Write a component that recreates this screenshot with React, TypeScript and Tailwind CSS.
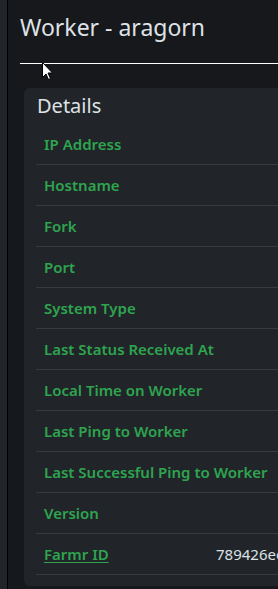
import React from "react";

const rows: { label: string; value?: string; link?: boolean }[] = [
  { label: "IP Address" },
  { label: "Hostname" },
  { label: "Fork" },
  { label: "Port" },
  { label: "System Type" },
  { label: "Last Status Received At" },
  { label: "Local Time on Worker" },
  { label: "Last Ping to Worker" },
  { label: "Last Successful Ping to Worker" },
  { label: "Version" },
  { label: "Farmr ID", value: "789426ee3b1f4c2a", link: true },
];

export default function App() {
  return (
    <div
      className="relative w-[278px] h-[589px] overflow-hidden flex bg-[#212529]"
      style={{ fontFamily: '"Noto Sans", "Open Sans", sans-serif' }}
    >
      <div className="w-[7px] shrink-0 bg-[#212529] border-r border-black box-content" />
      <div className="flex-1 min-w-0 bg-[#16181b] pl-[12px] pt-[13px]">
        <h4 className="text-[23px] leading-[28px] text-[#dee2e6] whitespace-nowrap">Worker - aragorn</h4>
        <div className="mt-[22px] h-px bg-white w-[600px]" />
        <div className="mt-[24px] ml-[4px] w-[600px] rounded-[6px] bg-[#212529] px-[12px] pt-[6px] pb-[11px]">
          <h5 className="text-[20px] leading-[24px] text-[#dee2e6] pl-px mb-[6px]">Details</h5>
          <div className="flex flex-col">
            {rows.map((r) => (
              <div key={r.label} className="flex h-[41px] items-center border-b border-[#373b3e] px-[8px] whitespace-nowrap">
                <span
                  className={
                    "w-[172px] shrink-0 overflow-visible text-[15px] font-semibold text-[#2ea44f] " +
                    (r.link ? "underline underline-offset-[2px]" : "")
                  }
                >
                  {r.label}
                </span>
                {r.value && <span className="text-[15px] text-[#dee2e6]">{r.value}</span>}
              </div>
            ))}
          </div>
        </div>
      </div>
      <svg className="absolute left-[42px] top-[62px]" width="12" height="19" viewBox="0 0 12 19">
        <path d="M0.5 0.5 L0.5 15.5 L4 12 L6.5 17.5 L8.5 16.5 L6 11 L10.5 11 Z" fill="#fff" stroke="#000" strokeWidth="1" />
      </svg>
    </div>
  );
}
